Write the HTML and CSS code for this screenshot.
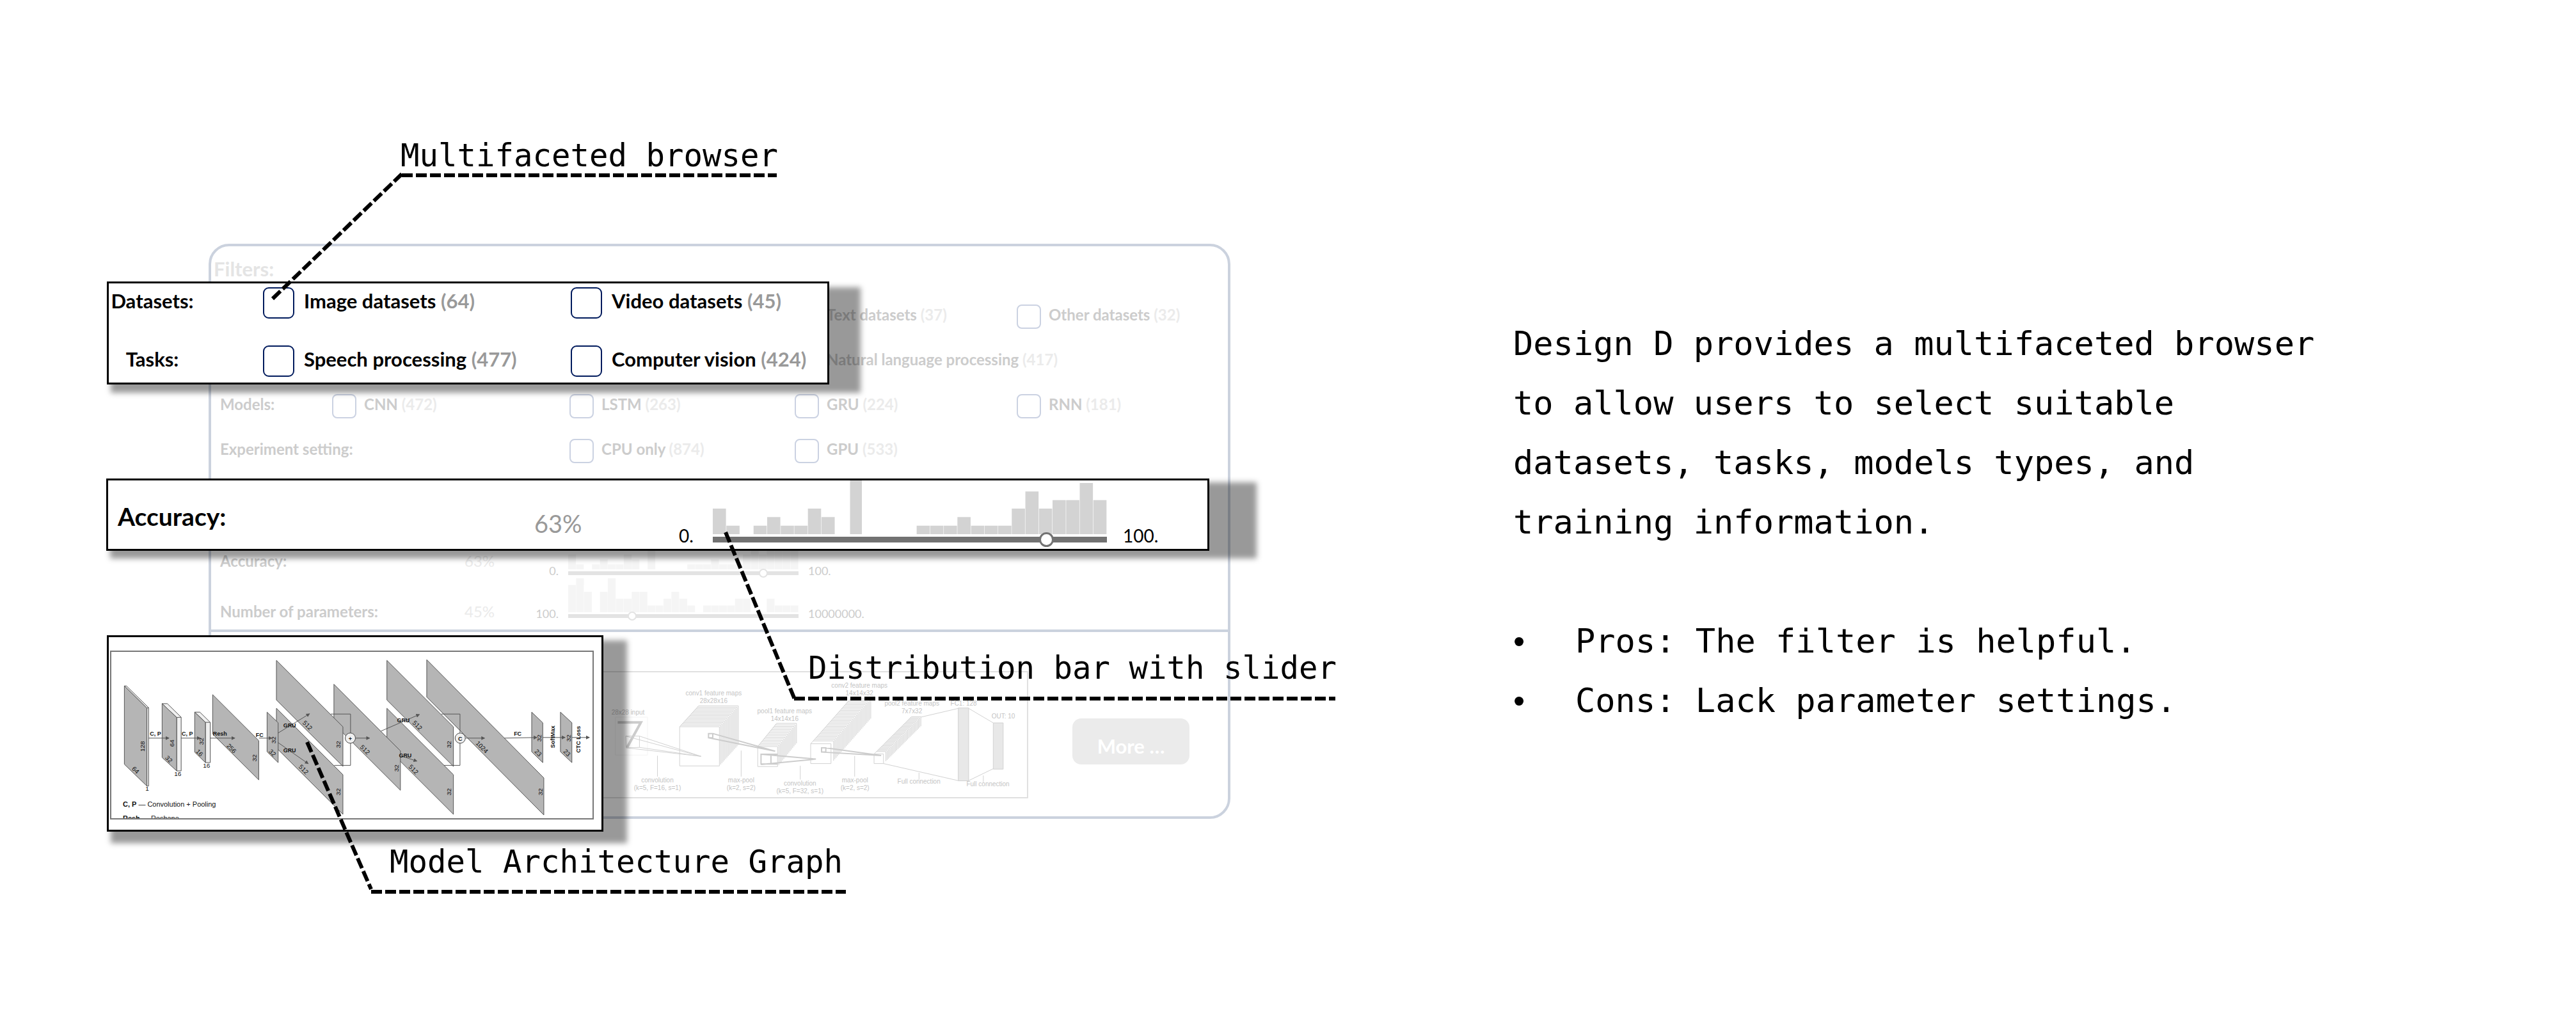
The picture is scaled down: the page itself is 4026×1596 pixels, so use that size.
FILE: index.html
```html
<!DOCTYPE html>
<html lang="en">
<head>
<meta charset="utf-8">
<title>Design D</title>
<link rel="stylesheet" href="styles.css">
</head>
<body>
<main class="slide">
  <section class="figure">
    <form class="panel">
      <div class="filters">
        <h2 class="filters-title">Filters:</h2>
        <div class="row">
          <label class="option col-3"><input type="checkbox" class="box"><span>Text datasets <span class="count">(37)</span></span></label>
          <label class="option col-4"><input type="checkbox" class="box"><span>Other datasets <span class="count">(32)</span></span></label>
        </div>
        <div class="row">
          <label class="option col-3"><input type="checkbox" class="box"><span>Natural language processing <span class="count">(417)</span></span></label>
        </div>
        <div class="row">
          <span class="row-name">Models:</span>
          <label class="option col-1"><input type="checkbox" class="box"><span>CNN <span class="count">(472)</span></span></label>
          <label class="option col-2"><input type="checkbox" class="box"><span>LSTM <span class="count">(263)</span></span></label>
          <label class="option col-3"><input type="checkbox" class="box"><span>GRU <span class="count">(224)</span></span></label>
          <label class="option col-4"><input type="checkbox" class="box"><span>RNN <span class="count">(181)</span></span></label>
        </div>
        <div class="row">
          <span class="row-name">Experiment setting:</span>
          <label class="option col-2"><input type="checkbox" class="box"><span>CPU only <span class="count">(874)</span></span></label>
          <label class="option col-3"><input type="checkbox" class="box"><span>GPU <span class="count">(533)</span></span></label>
        </div>
        <div class="range-row range-row-tall">
          <label class="range-name" for="acc-small">Accuracy:</label>
          <span class="range-value">63%</span>
          <span class="scale scale-min">0.</span>
          <div class="histogram">
            <svg class="bars bars-short" viewBox="0 0 29 6.3" preserveAspectRatio="none" aria-hidden="true"><path d="M0 6.3v-3h.97v3zM1 6.3v-1h.97v1zM3 6.3v-1h.97v1zM4 6.3v-2h.97v2zM5 6.3v-1h.97v1zM6 6.3v-1h.97v1zM7 6.3v-3h.97v3zM8 6.3v-2h.97v2zM10 6.3v-6.3h.97v6.3zM15 6.3v-1h.97v1zM16 6.3v-1h.97v1zM17 6.3v-1h.97v1zM18 6.3v-2h.97v2zM19 6.3v-1h.97v1zM20 6.3v-1h.97v1zM21 6.3v-1h.97v1zM22 6.3v-3h.97v3zM23 6.3v-5h.97v5zM24 6.3v-3h.97v3zM25 6.3v-4h.97v4zM26 6.3v-4h.97v4zM27 6.3v-6h.97v6zM28 6.3v-4h.97v4z"/></svg>
            <input class="slider" id="acc-small" type="range" min="0" max="100" value="86">
          </div>
          <span class="scale scale-max">100.</span>
        </div>
        <div class="range-row">
          <label class="range-name" for="params">Number of parameters:</label>
          <span class="range-value">45%</span>
          <span class="scale scale-min">100.</span>
          <div class="histogram">
            <svg class="bars" viewBox="0 0 29 5" preserveAspectRatio="none" aria-hidden="true"><path d="M0 5v-4h.97v4zM1 5v-5h.97v5zM2 5v-3h.97v3zM4 5v-3h.97v3zM5 5v-5h.97v5zM6 5v-2h.97v2zM7 5v-2h.97v2zM8 5v-3h.97v3zM9 5v-3h.97v3zM10 5v-1h.97v1zM11 5v-1h.97v1zM12 5v-2h.97v2zM13 5v-3h.97v3zM14 5v-2h.97v2zM15 5v-1h.97v1zM17 5v-1h.97v1zM18 5v-1h.97v1zM19 5v-1h.97v1zM20 5v-1h.97v1zM21 5v-2h.97v2zM22 5v-2h.97v2zM25 5v-2h.97v2zM26 5v-1h.97v1zM27 5v-1h.97v1zM28 5v-1h.97v1z"/></svg>
            <input class="slider" id="params" type="range" min="0" max="100" value="27">
          </div>
          <span class="scale scale-max">10000000.</span>
        </div>
      </div>
      <div class="preview">
        <div class="preview-frame">
          <svg class="network" viewBox="0 0 1259 195" preserveAspectRatio="xMaxYMid meet" aria-hidden="true">
            <g class="net-lines" transform="translate(593 -91) scale(.7398 .3333)">
              <path class="faint" d="M30 483H98V661H30z"/>
              <path class="seven" d="M35 508H84L55 625"/>
              <path d="M52 572H81V625L53 627zM52 572L211 667M81 572L211 667M81 625L211 667M53 627L211 667"/>
              <path d="M166 528H250V712H166zM206 430h84v184m-86.67-177.47h84v184m-86.67-177.47h84v184m-86.67-177.47h84v184m-86.67-177.47h84v184m-86.67-177.47h84v184m-86.67-177.47h84v184m-86.67-177.47h84v184m-86.67-177.47h84v184m-86.67-177.47h84v184m-86.67-177.47h84v184m-86.67-177.47h84v184m-86.67-177.47h84v184m-86.67-177.47h84v184m-86.67-177.47h84v184M166 528L206 430"/>
              <path d="M331 621H373V715H331zM371 512h42v94m-44.67-86.73h42v94m-44.67-86.73h42v94m-44.67-86.73h42v94m-44.67-86.73h42v94m-44.67-86.73h42v94m-44.67-86.73h42v94m-44.67-86.73h42v94m-44.67-86.73h42v94m-44.67-86.73h42v94m-44.67-86.73h42v94m-44.67-86.73h42v94m-44.67-86.73h42v94m-44.67-86.73h42v94m-44.67-86.73h42v94M331 621L371 512"/>
              <path d="M443 608H486V701H443zM527 397h43v93m-45.71-86.19h43v93m-45.71-86.19h43v93m-45.71-86.19h43v93m-45.71-86.19h43v93m-45.71-86.19h43v93m-45.71-86.19h43v93m-45.71-86.19h43v93m-45.71-86.19h43v93m-45.71-86.19h43v93m-45.71-86.19h43v93m-45.71-86.19h43v93m-45.71-86.19h43v93m-45.71-86.19h43v93m-45.71-86.19h43v93m-45.71-86.19h43v93m-45.71-86.19h43v93m-45.71-86.19h43v93m-45.71-86.19h43v93m-45.71-86.19h43v93m-45.71-86.19h43v93m-45.71-86.19h43v93m-45.71-86.19h43v93m-45.71-86.19h43v93m-45.71-86.19h43v93m-45.71-86.19h43v93m-45.71-86.19h43v93m-45.71-86.19h43v93m-45.71-86.19h43v93m-45.71-86.19h43v93M443 608L527 397"/>
              <path d="M577 656H597V701H577zM656 481h20v45m-22.55-39.35h20v45m-22.55-39.35h20v45m-22.55-39.35h20v45m-22.55-39.35h20v45m-22.55-39.35h20v45m-22.55-39.35h20v45m-22.55-39.35h20v45m-22.55-39.35h20v45m-22.55-39.35h20v45m-22.55-39.35h20v45m-22.55-39.35h20v45m-22.55-39.35h20v45m-22.55-39.35h20v45m-22.55-39.35h20v45m-22.55-39.35h20v45m-22.55-39.35h20v45m-22.55-39.35h20v45m-22.55-39.35h20v45m-22.55-39.35h20v45m-22.55-39.35h20v45m-22.55-39.35h20v45m-22.55-39.35h20v45m-22.55-39.35h20v45m-22.55-39.35h20v45m-22.55-39.35h20v45m-22.55-39.35h20v45m-22.55-39.35h20v45m-22.55-39.35h20v45m-22.55-39.35h20v45M577 656L656 481"/>
              <path class="solid" d="M755 440H777V782H755zM829 510H850V727H829z"/>
              <path d="M676 483L755 442M597 701L755 781M777 442L829 510M777 781L829 725"/>
              <path class="kernel" d="M227 560H236V580H227zM236 560L368 643M227 580L368 643M338 657H359V703H338zM359 657H373M359 703H373M338 657L454 680L338 705M466 627H475V647H466zM475 627L592 663L466 647"/>
              <path d="M119 664V762M296 640V762M421 711V776M536 665V762M672 744V776M808 757V788"/>
            </g>
            <g class="net-text">
              <text x="635" y="66">28x28 input</text>
              <text x="769" y="36">conv1 feature maps</text><text x="769" y="48">28x28x16</text>
              <text x="880" y="64">pool1 feature maps</text><text x="880" y="76">14x14x16</text>
              <text x="997" y="24">conv2 feature maps</text><text x="997" y="36">14x14x32</text>
              <text x="1079" y="52">pool2 feature maps</text><text x="1079" y="64">7x7x32</text>
              <text x="1160" y="52">FC1: 128</text><text x="1222" y="72">OUT: 10</text>
              <text x="681" y="172">convolution</text><text x="681" y="184">(k=5, F=16, s=1)</text>
              <text x="812" y="172">max-pool</text><text x="812" y="184">(k=2, s=2)</text>
              <text x="904" y="177">convolution</text><text x="904" y="189">(k=5, F=32, s=1)</text>
              <text x="990" y="172">max-pool</text><text x="990" y="184">(k=2, s=2)</text>
              <text x="1090" y="174">Full connection</text><text x="1198" y="178">Full connection</text>
            </g>
          </svg>
        </div>
        <button type="button" class="more">More …</button>
      </div>
    </form>

    <div class="callout callout-browser">
      <div class="card browser">
        <span class="browser-name">Datasets:</span>
        <label class="choice"><input type="checkbox" class="choice-box"><span>Image datasets <span class="choice-count">(64)</span></span></label>
        <label class="choice"><input type="checkbox" class="choice-box"><span>Video datasets <span class="choice-count">(45)</span></span></label>
        <span class="browser-name">Tasks:</span>
        <label class="choice"><input type="checkbox" class="choice-box"><span>Speech processing <span class="choice-count">(477)</span></span></label>
        <label class="choice"><input type="checkbox" class="choice-box"><span>Computer vision <span class="choice-count">(424)</span></span></label>
      </div>
    </div>

    <div class="callout callout-accuracy">
      <div class="card accuracy">
        <label class="accuracy-name" for="acc-large">Accuracy:</label>
        <span class="accuracy-value">63%</span>
        <span class="accuracy-scale">0.</span>
        <div class="histogram histogram-large">
          <svg class="bars bars-large" viewBox="0 0 29 6.3" preserveAspectRatio="none" aria-hidden="true"><path d="M0 6.3v-3h.97v3zM1 6.3v-1h.97v1zM3 6.3v-1h.97v1zM4 6.3v-2h.97v2zM5 6.3v-1h.97v1zM6 6.3v-1h.97v1zM7 6.3v-3h.97v3zM8 6.3v-2h.97v2zM10.1 6.3v-6.3h.87v6.3zM15 6.3v-1h.97v1zM16 6.3v-1h.97v1zM17 6.3v-1h.97v1zM18 6.3v-2h.97v2zM19 6.3v-1h.97v1zM20 6.3v-1h.97v1zM21 6.3v-1h.97v1zM22 6.3v-3h.97v3zM23 6.3v-5h.97v5zM24 6.3v-3h.97v3zM25 6.3v-4h.97v4zM26 6.3v-4h.97v4zM27 6.3v-6h.97v6zM28 6.3v-4h.97v4z"/></svg>
          <input class="slider slider-large" id="acc-large" type="range" min="0" max="100" value="86">
        </div>
        <span class="accuracy-scale">100.</span>
      </div>
    </div>

    <div class="callout callout-graph">
      <div class="card graph">
        <svg class="graph-frame" viewBox="0 0 753 260" aria-hidden="true">
          <defs>
            <marker id="tip" viewBox="0 0 6 6" refX="5" refY="3" markerWidth="6" markerHeight="6" markerUnits="userSpaceOnUse" orient="auto"><path d="M0 0L6 3L0 6z" fill="#555"/></marker>
          </defs>
          <g class="planes" transform="translate(-23 -39) scale(.5421 .3333)">
            <path class="side" d="M80 277H86L150 379V747H145V381zM189 360H204L244 424V676H231V425zM283 400H298L328 448V637H314V448z"/>
            <path class="side" d="M145 381L150 379M231 425L244 424M314 448H328"/>
            <path d="M80 277L145 381V747L80 645zM189 360L231 425V676L189 613zM283 400L314 448V637L283 588z"/>
            <path d="M335 318L468 534V718L335 503z"/>
            <path d="M519 382L711 694V880L519 568z"/>
            <path d="M838 382L1030 694V880L838 568z"/>
            <path d="M685 269L877 582V767L685 455z"/>
            <path d="M953 154L1291 709V883L953 329z"/>
            <path d="M519 157L711 469V655L519 343z"/>
            <path d="M838 157L1030 469V655L838 343z"/>
            <path d="M492 400L524 450V637L492 586z"/>
            <path d="M1256 400L1288 450V637L1256 586zM1339 400L1372 450V637L1339 586z"/>
            <path class="wire" d="M676 409H733V650H686M995 409H1049V650H1003"/>
          </g>
          <g class="arrows">
            <path d="M58 135H90"/><path d="M109 135H139"/><path d="M155 135H193"/><path d="M231 135H251"/>
            <path d="M261 127L310 97"/><path d="M261 142L308 175"/><path d="M382 135H404"/><path d="M422 124L482 98"/>
            <path d="M454 163L478 171"/><path d="M554 135H584"/><path d="M615 135L666 134"/><path d="M675 134H710"/><path d="M721 134H748"/>
          </g>
          <g class="joints"><circle cx="374" cy="135" r="8"/><circle cx="546" cy="135" r="8"/></g>
          <g class="graph-bold">
            <text x="69" y="128">C, P</text><text x="119" y="128">C, P</text><text x="170" y="128">Resh</text><text x="232" y="130">FC</text>
            <text x="279" y="115">GRU</text><text x="279" y="154">GRU</text><text x="457" y="107">GRU</text><text x="460" y="162">GRU</text><text x="636" y="128">FC</text>
            <text x="374" y="136">+</text><text x="546" y="136">C</text>
            <text transform="translate(691 133) rotate(-90)">SoftMax</text><text transform="translate(731 137) rotate(-90)">CTC Loss</text>
          </g>
          <g class="graph-text">
            <text transform="translate(49 148) rotate(-90)">128</text><text transform="translate(38 185) rotate(45)">64</text><text x="56" y="214">1</text>
            <text transform="translate(95 143) rotate(-90)">64</text><text transform="translate(90 168) rotate(45)">32</text><text x="104" y="191">16</text>
            <text transform="translate(141 140) rotate(-90)">32</text><text transform="translate(138 158) rotate(45)">16</text><text x="149" y="178">16</text>
            <text transform="translate(188 151) rotate(45)">256</text><text transform="translate(224 166) rotate(-90)">32</text>
            <text transform="translate(254 138) rotate(-90)">32</text><text transform="translate(252 158) rotate(45)">32</text>
            <text transform="translate(307 115) rotate(45)">512</text><text transform="translate(301 184) rotate(45)">512</text>
            <text transform="translate(355 145) rotate(-90)">32</text><text transform="translate(355 219) rotate(-90)">32</text>
            <text transform="translate(397 153) rotate(45)">512</text><text transform="translate(446 182) rotate(-90)">32</text>
            <text transform="translate(479 115) rotate(45)">512</text><text transform="translate(473 184) rotate(45)">512</text>
            <text transform="translate(528 145) rotate(-90)">32</text><text transform="translate(528 219) rotate(-90)">32</text>
            <text transform="translate(580 149) rotate(45)">1024</text><text transform="translate(671 219) rotate(-90)">32</text>
            <text transform="translate(669 135) rotate(-90)">32</text><text transform="translate(668 158) rotate(45)">23</text>
            <text transform="translate(715 135) rotate(-90)">32</text><text transform="translate(713 158) rotate(45)">23</text>
          </g>
          <g class="legend">
            <text x="18" y="242"><tspan class="strong">C, P</tspan> — Convolution + Pooling</text>
            <text x="18" y="264"><tspan class="strong">Resh</tspan> — Reshape</text>
          </g>
        </svg>
      </div>
    </div>

    <svg class="leaders" width="2100" height="1420" viewBox="0 0 2100 1420" aria-hidden="true">
      <path d="M426 467L628 272"/><path d="M628 274H1214"/>
      <path d="M1134 832L1242 1093"/><path d="M1241 1092H2087"/>
      <path d="M480 1160L580 1390"/><path d="M580 1394H1322"/>
    </svg>
    <p class="tag tag-browser">Multifaceted browser</p>
    <p class="tag tag-slider">Distribution bar with slider</p>
    <p class="tag tag-graph">Model Architecture Graph</p>
  </section>

  <section class="notes">
    <p class="notes-text">Design D provides a multifaceted browser to allow users to select suitable datasets, tasks, models types, and training information.</p>
    <ul class="notes-list">
      <li>Pros: The filter is helpful.</li>
      <li>Cons: Lack parameter settings.</li>
    </ul>
  </section>
</main>
</body>
</html>
```
FILE: styles.css
```css
* { box-sizing: border-box; }

body {
  margin: 0;
  background: #fff;
  color: #000;
  font-family: Lato, "Liberation Sans", sans-serif;
}

.slide {
  display: grid;
  grid-template-columns: minmax(2100px, 2365fr) minmax(1250px, 1661fr);
  min-height: 100vh;
}

.figure {
  position: relative;
  padding: 381px 0 0 326px;
}

/* Filter panel, dimmed behind the callouts */
.panel {
  width: 1597px;
  border: 4px solid #cbd2de;
  border-radius: 32px;
  color: #ccc;
  font-size: 24px;
  font-weight: 700;
}

.filters-title {
  margin: 0 0 21px;
  padding-left: 4px;
  color: #e4e4e4;
  font-size: 31px;
  line-height: 70px;
}

.row {
  display: grid;
  grid-template-columns: 189px 371px 352px 347px 1fr;
  align-items: start;
  height: 70px;
  line-height: 32px;
}

.row-name { grid-area: 1 / 1 / 2 / 3; padding-left: 14px; }
.col-1 { grid-area: 1 / 2; }
.col-2 { grid-area: 1 / 3; }
.col-3 { grid-area: 1 / 4; }
.col-4 { grid-area: 1 / 5; }

.option {
  display: flex;
  gap: 12px;
  white-space: nowrap;
}

.box {
  appearance: none;
  flex: none;
  width: 38px;
  height: 38px;
  margin: 0;
  border: 2px solid #cbd2e2;
  border-radius: 8px;
  background: #fff;
}

.count { color: #ebebeb; }

.range-row {
  display: grid;
  grid-template-columns: 382px 43px 119px 360px auto;
  align-items: end;
  height: 80px;
  padding: 0 0 18px 14px;
}

.range-row-tall { height: 148px; padding-bottom: 5px; }

.range-name, .range-value { line-height: 20px; }
.range-row-tall .range-name, .range-row-tall .range-value { padding-bottom: 12px; }
.range-value { color: #ebebeb; font-weight: 400; }

.scale {
  font-size: 18px;
  font-weight: 400;
  line-height: 14px;
}

.scale-min { padding-right: 15px; text-align: right; }
.scale-max { padding-left: 15px; }

.histogram {
  display: flex;
  flex-direction: column;
  gap: 3px;
}

.bars {
  display: block;
  width: 100%;
  height: 53px;
  fill: #f5f5f5;
}

.bars-short { height: 49px; }

.slider {
  appearance: none;
  display: block;
  width: 100%;
  height: 6px;
  margin: 0;
  background: #e3e3e3;
}

.slider::-webkit-slider-thumb {
  appearance: none;
  width: 14px;
  height: 14px;
  border: 2px solid #e3e3e3;
  border-radius: 50%;
  background: #fff;
}

.preview {
  display: flex;
  align-items: center;
  gap: 69px;
  padding: 61px 60px 28px 15px;
  border-top: 4px solid #cbd2de;
}

.preview-frame {
  flex: 1;
  border: 2px solid #e0e0e0;
}

.network { display: block; width: 100%; height: 195px; }
.net-lines path { fill: none; stroke: #d2d2d2; stroke-width: 1px; vector-effect: non-scaling-stroke; }
.net-lines .faint { stroke: #f4f4f4; }
.net-lines .seven { stroke: #ccc; stroke-width: 4px; }
.net-lines .solid { fill: #e8e8e8; }
.net-lines .kernel { stroke: #ccc; stroke-width: 2px; }
.net-text { fill: #c4c4c4; font: 400 10px "Liberation Sans", sans-serif; text-anchor: middle; }

.more {
  width: 183px;
  height: 72px;
  margin: 20px 0 0;
  padding: 14px 0 0;
  border: 0;
  border-radius: 14px;
  background: #ebebeb;
  color: #fff;
  font: 700 31px Lato, sans-serif;
}

/* Enlarged callouts lying over the panel */
.callout { position: absolute; }

.callout::before {
  content: "";
  position: absolute;
  background: rgb(0 0 0 / 40%);
  filter: blur(4px);
}

.callout-browser { left: 167px; top: 440px; width: 1129px; }
.callout-browser::before { inset: 9px -49px -13px 6px; }
.callout-accuracy { left: 166px; top: 748px; width: 1724px; }
.callout-accuracy::before { inset: 6px -74px -12px 6px; }
.callout-graph { left: 167px; top: 993px; width: 776px; }
.callout-graph::before { inset: 8px -37px -18px 6px; }

.card {
  position: relative;
  border: 3px solid #000;
  background: #fff;
}

.browser {
  display: grid;
  grid-template-columns: 136px 376px 1fr;
  gap: 41px 105px;
  padding: 6px 0 8px;
  font-size: 31px;
  font-weight: 700;
  line-height: 42px;
}

.browser-name { text-align: center; }

.choice {
  display: flex;
  gap: 15px;
  height: 50px;
  white-space: nowrap;
}

.choice-box {
  appearance: none;
  flex: none;
  width: 49px;
  height: 49px;
  margin: 0;
  border: 2px solid #001a5c;
  border-radius: 9px;
}

.choice-count { color: #999; }

.accuracy {
  display: grid;
  grid-template-columns: 651px 226px 53px 616px 1fr;
  align-items: end;
  padding: 0 0 10px 15px;
}

.accuracy-name { padding-bottom: 25px; font-size: 39px; font-weight: 700; line-height: 32px; }
.accuracy-value { padding-bottom: 14px; color: #999; font-size: 38px; line-height: 32px; }
.accuracy-scale { font-size: 28px; line-height: 22px; }
.accuracy-scale:last-child { padding-left: 25px; }

.histogram-large { gap: 4px; }
.bars-large { height: 84px; fill: #d3d3d3; }
.slider-large { height: 9px; background: #727272; }

.slider-large::-webkit-slider-thumb {
  width: 23px;
  height: 23px;
  border: 3px solid #727272;
}

.graph { padding: 21px 12px 16px 2px; }

.graph-frame {
  display: block;
  width: 100%;
  border: 2px solid #777;
}

.planes path { fill: #b5b5b5; stroke: #555; stroke-width: 1px; vector-effect: non-scaling-stroke; }
.planes .side { fill: #f0f0f0; }
.planes .wire { fill: none; }
.arrows path { fill: none; stroke: #555; stroke-width: 1px; marker-end: url(#tip); }
.joints circle { fill: #f0f0f0; stroke: #444; stroke-width: 1px; }
.graph-text, .graph-bold, .legend { font-family: "Liberation Sans", sans-serif; fill: #111; }
.graph-text text, .graph-bold text { text-anchor: middle; dominant-baseline: central; }
.graph-text { font-size: 10px; }
.graph-bold { font-size: 9px; font-weight: 700; }
.legend { font-size: 11px; }
.strong { font-weight: 700; }

/* Dashed leaders and their tags */
.leaders {
  position: absolute;
  left: 0;
  top: 0;
  fill: none;
  stroke: #000;
  stroke-width: 6px;
  stroke-dasharray: 17 5;
  pointer-events: none;
}

.tag {
  position: absolute;
  margin: 0;
  font-family: "DejaVu Sans Mono", monospace;
  font-size: 49px;
  line-height: 60px;
  white-space: nowrap;
}

.tag-browser { left: 626px; top: 214px; }
.tag-slider { left: 1263px; top: 1015px; }
.tag-graph { left: 609px; top: 1318px; }

.notes {
  padding: 491px 400px 0 0;
  font-family: "DejaVu Sans Mono", monospace;
  font-size: 52px;
  line-height: 93px;
}

.notes-text { margin: 0 0 93px; }
.notes-list { margin: 0; padding: 0; list-style: none; }
.notes-list li { display: flex; }
.notes-list li::before { content: "•"; width: 97px; font-family: "Liberation Sans", sans-serif; }
```
